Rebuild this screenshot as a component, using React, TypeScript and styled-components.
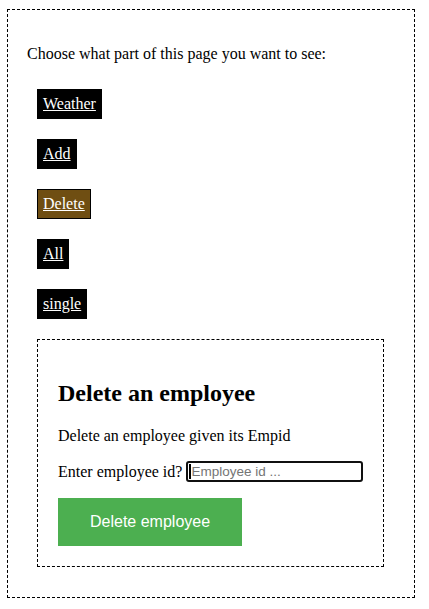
import React from "react";
import styled, { createGlobalStyle } from "styled-components";

const Global = createGlobalStyle`
  html, body { margin: 0; padding: 0; background: #ffffff; }
  body { font-family: "Liberation Serif", "Times New Roman", serif; font-size: 16px; color: #000; }
`;

const Page = styled.div`
  box-sizing: border-box;
  width: 408px;
  margin: 9px 0 0 7px;
  padding: 19px 19px 20px 19px;
  border: 1px dashed #000;
  display: flex;
  flex-direction: column;
  align-items: flex-start;
`;

const Intro = styled.p`
  margin: 16px 0 0;
`;

const Nav = styled.nav`
  display: flex;
  flex-direction: column;
  align-items: flex-start;
  gap: 20px;
  margin: 26px 0 0 10px;
`;

const NavLink = styled.a<{ $active?: boolean }>`
  display: inline-block;
  padding: 5px;
  border: 1px solid #000;
  background: ${(p) => (p.$active ? "#6f4e12" : "#000")};
  color: #fff;
  text-decoration: underline;
  cursor: pointer;
`;

const Panel = styled.section`
  box-sizing: border-box;
  width: 347px;
  margin: 20px 0 10px 10px;
  padding: 20px;
  border: 1px dashed #000;
`;

const Heading = styled.h2`
  font-size: 24px;
  font-weight: bold;
  margin: 20px 0 0;
`;

const Text = styled.p`
  margin: 20px 0 0;
`;

const Row = styled.div`
  margin: 16px 0 0;
  display: flex;
  align-items: center;
  gap: 4px;
  white-space: nowrap;
`;

const Label = styled.label`
  flex-shrink: 0;
  white-space: nowrap;
`;

const Field = styled.span`
  position: relative;
  display: inline-block;
  flex-shrink: 0;
`;

const Input = styled.input`
  box-sizing: border-box;
  width: 177px;
  height: 21px;
  padding: 1px 3px;
  border: 2px solid #101010;
  border-radius: 3px;
  font-family: "Liberation Sans", Arial, sans-serif;
  font-size: 13.5px;
  outline: none;
  display: block;
  &::placeholder { color: #757575; }
`;

const Caret = styled.span`
  position: absolute;
  left: 3px;
  top: 3px;
  width: 2px;
  height: 15px;
  background: #000;
`;

const Button = styled.button`
  margin-top: 16px;
  display: block;
  padding: 15px 32px;
  border: none;
  background: #4caf50;
  color: #fff;
  font-family: "Liberation Sans", Arial, sans-serif;
  font-size: 16px;
  line-height: 18px;
  cursor: pointer;
`;

const links = ["Weather", "Add", "Delete", "All", "single"];

export default function App() {
  return (
    <>
      <Global />
      <Page>
        <Intro>Choose what part of this page you want to see:</Intro>
        <Nav>
          {links.map((l) => (
            <NavLink key={l} $active={l === "Delete"}>
              {l}
            </NavLink>
          ))}
        </Nav>
        <Panel>
          <Heading>Delete an employee</Heading>
          <Text>Delete an employee given its Empid</Text>
          <Row>
            <Label>Enter employee id?</Label>
            <Field>
              <Input placeholder="Employee id ..." />
              <Caret />
            </Field>
          </Row>
          <Button>Delete employee</Button>
        </Panel>
      </Page>
    </>
  );
}
